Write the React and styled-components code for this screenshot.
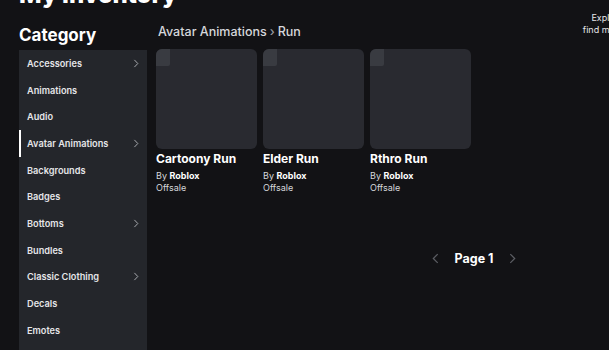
import React from "react";
import styled, { createGlobalStyle } from "styled-components";

const Global = createGlobalStyle`
  html, body { margin: 0; padding: 0; background: #121215; overflow: hidden; }
  body { font-family: Inter, "Noto Sans", sans-serif; color: #f0f0f2; }
`;

const Page = styled.div`
  width: 840px;
  padding-left: 19px;
  margin-top: -28px;
  box-sizing: border-box;
`;

const Header = styled.header`
  display: flex;
  align-items: flex-start;
  height: 52px;
`;

const Title = styled.h1`
  margin: 3px 0 0;
  font-size: 24px;
  font-weight: 800;
  line-height: 40px;
  color: #ffffff;
`;

const Promo = styled.div`
  margin-left: auto;
  margin-right: 147px;
  margin-top: 40px;
  width: 120px;
  font-size: 9px;
  line-height: 12px;
  text-align: center;
  color: #e6e6ea;
  white-space: nowrap;
`;

const Body = styled.div`
  display: flex;
  gap: 9px;
`;

const Side = styled.aside`
  width: 128px;
  flex: none;
`;

const SideHeading = styled.h2`
  margin: 0;
  height: 26px;
  font-size: 17px;
  font-weight: 700;
  line-height: 22px;
  color: #ffffff;
`;

const List = styled.ul`
  list-style: none;
  margin: 0;
  padding: 0;
  background: #24262b;
`;

const Item = styled.li`
  display: flex;
  align-items: center;
  justify-content: space-between;
  height: 26.7px;
  padding: 0 8px;
  font-size: 9.2px;
  font-weight: 600;
  color: #e4e5e8;
  box-shadow: ${(p) => (p.$active ? "inset 2px 0 0 #ffffff" : "none")};
`;

const Chevron = styled.svg`
  width: ${(p) => p.$w || 6}px;
  height: ${(p) => p.$h || 9}px;
  flex: none;
`;

const Main = styled.main`
  width: 636px;
  flex: none;
`;

const Crumbs = styled.div`
  display: flex;
  align-items: center;
  gap: 3px;
  height: 23px;
  margin-top: -4px;
  margin-bottom: 6px;
  padding-left: 2px;
  font-size: 12.5px;
  font-weight: 500;
  color: #d6d7db;
`;

const Sep = styled.span`
  color: #9a9ca2;
`;

const Grid = styled.div`
  display: grid;
  grid-template-columns: repeat(3, 101px);
  gap: 6px;
`;

const Card = styled.div`
  display: flex;
  flex-direction: column;
`;

const Thumb = styled.div`
  position: relative;
  height: 100px;
  border-radius: 6px;
  background: #292a30;
  overflow: hidden;
`;

const Corner = styled.div`
  position: absolute;
  left: 0;
  top: 0;
  width: 14px;
  height: 17px;
  background: #393b41;
  border-bottom-right-radius: 2px;
`;

const Name = styled.div`
  margin-top: 2px;
  font-size: 12px;
  font-weight: 700;
  line-height: 16px;
  color: #ffffff;
`;

const Meta = styled.div`
  margin-top: ${(p) => p.$gap || 0}px;
  font-size: 9px;
  line-height: 12px;
  color: #d6d7db;
  b { color: #ffffff; font-weight: 700; }
`;

const Pager = styled.div`
  display: flex;
  align-items: center;
  justify-content: center;
  gap: 16px;
  margin-top: 57px;
`;

const PageLabel = styled.span`
  font-size: 12.5px;
  font-weight: 700;
  color: #ffffff;
`;

const Arrow = ({ left }) => (
  <Chevron viewBox="0 0 6 10" $w={7} $h={11}>
    <path
      d={left ? "M5 1 L1 5 L5 9" : "M1 1 L5 5 L1 9"}
      fill="none"
      stroke="#5c5e64"
      strokeWidth="1.1"
    />
  </Chevron>
);

const SideArrow = () => (
  <Chevron viewBox="0 0 6 10">
    <path d="M1.2 1 L5 5 L1.2 9" fill="none" stroke="#b6b8bd" strokeWidth="1" />
  </Chevron>
);

const categories = [
  ["Accessories", true],
  ["Animations", false],
  ["Audio", false],
  ["Avatar Animations", true, true],
  ["Backgrounds", false],
  ["Badges", false],
  ["Bottoms", true],
  ["Bundles", false],
  ["Classic Clothing", true],
  ["Decals", false],
  ["Emotes", false],
  ["Faces", false],
];

const items = ["Cartoony Run", "Elder Run", "Rthro Run"];

export default function App() {
  return (
    <>
      <Global />
      <Page>
        <Header>
          <Title>My Inventory</Title>
          <Promo>
            Explore the Catalog
            <br />
            find more items to wear
          </Promo>
        </Header>
        <Body>
          <Side>
            <SideHeading>Category</SideHeading>
            <List>
              {categories.map(([name, sub, active]) => (
                <Item key={name} $active={active}>
                  <span>{name}</span>
                  {sub && <SideArrow />}
                </Item>
              ))}
            </List>
          </Side>
          <Main>
            <Crumbs>
              <span>Avatar Animations</span>
              <Sep>›</Sep>
              <span>Run</span>
            </Crumbs>
            <Grid>
              {items.map((n) => (
                <Card key={n}>
                  <Thumb>
                    <Corner />
                  </Thumb>
                  <Name>{n}</Name>
                  <Meta $gap={3}>
                    By <b>Roblox</b>
                  </Meta>
                  <Meta>Offsale</Meta>
                </Card>
              ))}
            </Grid>
            <Pager>
              <Arrow left />
              <PageLabel>Page 1</PageLabel>
              <Arrow />
            </Pager>
          </Main>
        </Body>
      </Page>
    </>
  );
}
